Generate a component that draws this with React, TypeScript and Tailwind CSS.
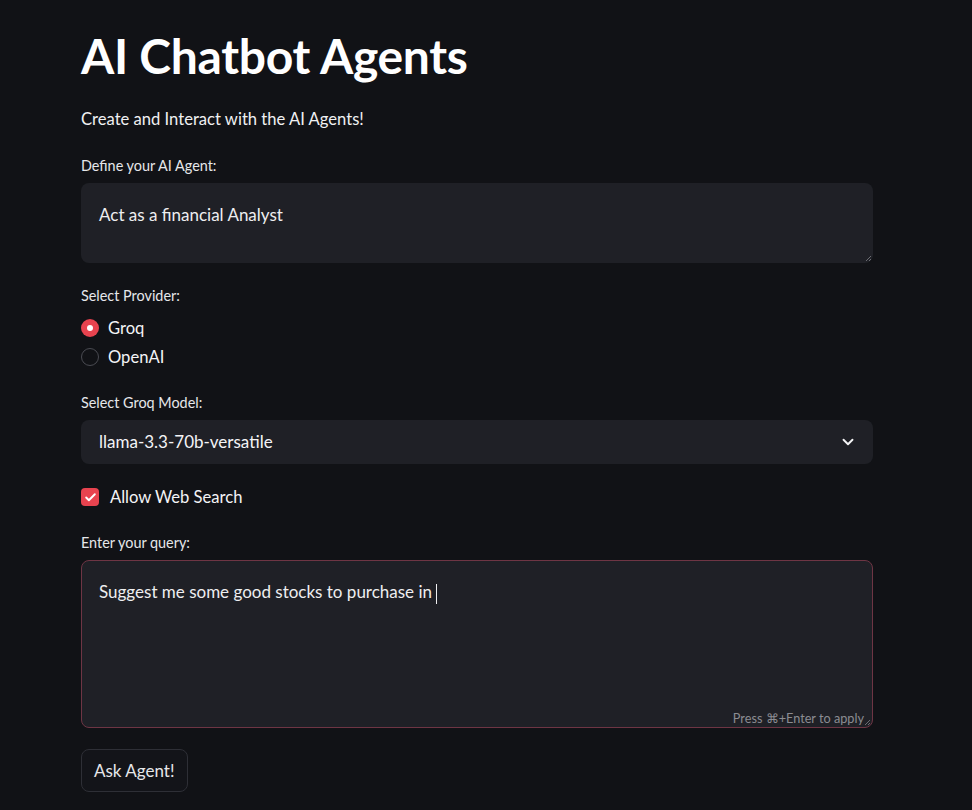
import { ChevronDown, Check } from "lucide-react";

const font = { fontFamily: "Lato, 'Noto Sans', sans-serif" };

function Label({ children }: { children: React.ReactNode }) {
  return <p className="text-[14.4px] text-[#e6e7ea] mb-[7px] leading-[20px]">{children}</p>;
}

function ResizeGrip() {
  return (
    <svg className="absolute right-[1px] bottom-[1px]" width="7" height="7" viewBox="0 0 7 7">
      <path d="M6 1 L1 6 M6 4 L4 6" stroke="#6b6c72" strokeWidth="1" />
    </svg>
  );
}

export default function App() {
  return (
    <div className="min-h-[810px] bg-[#111216] text-[#f4f4f6]" style={font}>
      <div className="w-[792px] ml-[81px] pt-[26px]">
        <h1 className="text-[48px] font-bold leading-[60px] tracking-[-0.3px] text-white">AI Chatbot Agents</h1>
        <p className="mt-[21px] text-[16.6px] leading-[24px] text-[#f0f0f2]">Create and Interact with the AI Agents!</p>

        <div className="mt-[25px]">
          <Label>Define your AI Agent:</Label>
          <div className="relative h-[80px] rounded-[8px] bg-[#1f2026] px-[18px] pt-[20px] text-[17px] leading-[24px] text-[#eeeef0]">
            Act as a financial Analyst
            <ResizeGrip />
          </div>
        </div>

        <div className="mt-[23px]">
          <Label>Select Provider:</Label>
          <div className="pt-[3px] flex flex-col gap-[5px]">
            <div className="flex items-center gap-[9px] h-[24px]">
              <span className="w-[18px] h-[18px] rounded-full bg-[#e8434f] flex items-center justify-center">
                <span className="w-[6px] h-[6px] rounded-full bg-white" />
              </span>
              <span className="text-[16.6px]">Groq</span>
            </div>
            <div className="flex items-center gap-[9px] h-[24px]">
              <span className="w-[18px] h-[18px] rounded-full border border-[#4a4b52]" />
              <span className="text-[16.6px]">OpenAI</span>
            </div>
          </div>
        </div>

        <div className="mt-[24px]">
          <Label>Select Groq Model:</Label>
          <div className="h-[44px] rounded-[8px] bg-[#1f2026] flex items-center justify-between px-[18px] pr-[16px] text-[17px]">
            <span>llama-3.3-70b-versatile</span>
            <ChevronDown size={18} strokeWidth={2.5} className="text-[#f4f4f6]" />
          </div>
        </div>

        <div className="mt-[21px] flex items-center gap-[11px] h-[24px]">
          <span className="w-[18px] h-[18px] rounded-[4px] bg-[#e8434f] flex items-center justify-center">
            <Check size={13} strokeWidth={3.5} className="text-white" />
          </span>
          <span className="text-[16.6px]">Allow Web Search</span>
        </div>

        <div className="mt-[24px]">
          <Label>Enter your query:</Label>
          <div className="relative h-[168px] rounded-[8px] bg-[#1f2026] border border-[#6e3544] px-[17px] pt-[19px] text-[17px] leading-[24px] text-[#eeeef0]">
            <span>Suggest me some good stocks to purchase in </span>
            <span className="inline-block w-px h-[20px] bg-[#eeeef0] align-middle" />
            <span className="absolute right-[8px] bottom-0 text-[12.7px] leading-[18px] text-[#8b8c92]">Press ⌘+Enter to apply</span>
            <ResizeGrip />
          </div>
        </div>

        <button className="mt-[21px] h-[43px] px-[12px] rounded-[8px] border border-[#2e2f36] bg-[#131419] text-[17px] text-[#e6e7ea]">
          Ask Agent!
        </button>
      </div>
    </div>
  );
}
